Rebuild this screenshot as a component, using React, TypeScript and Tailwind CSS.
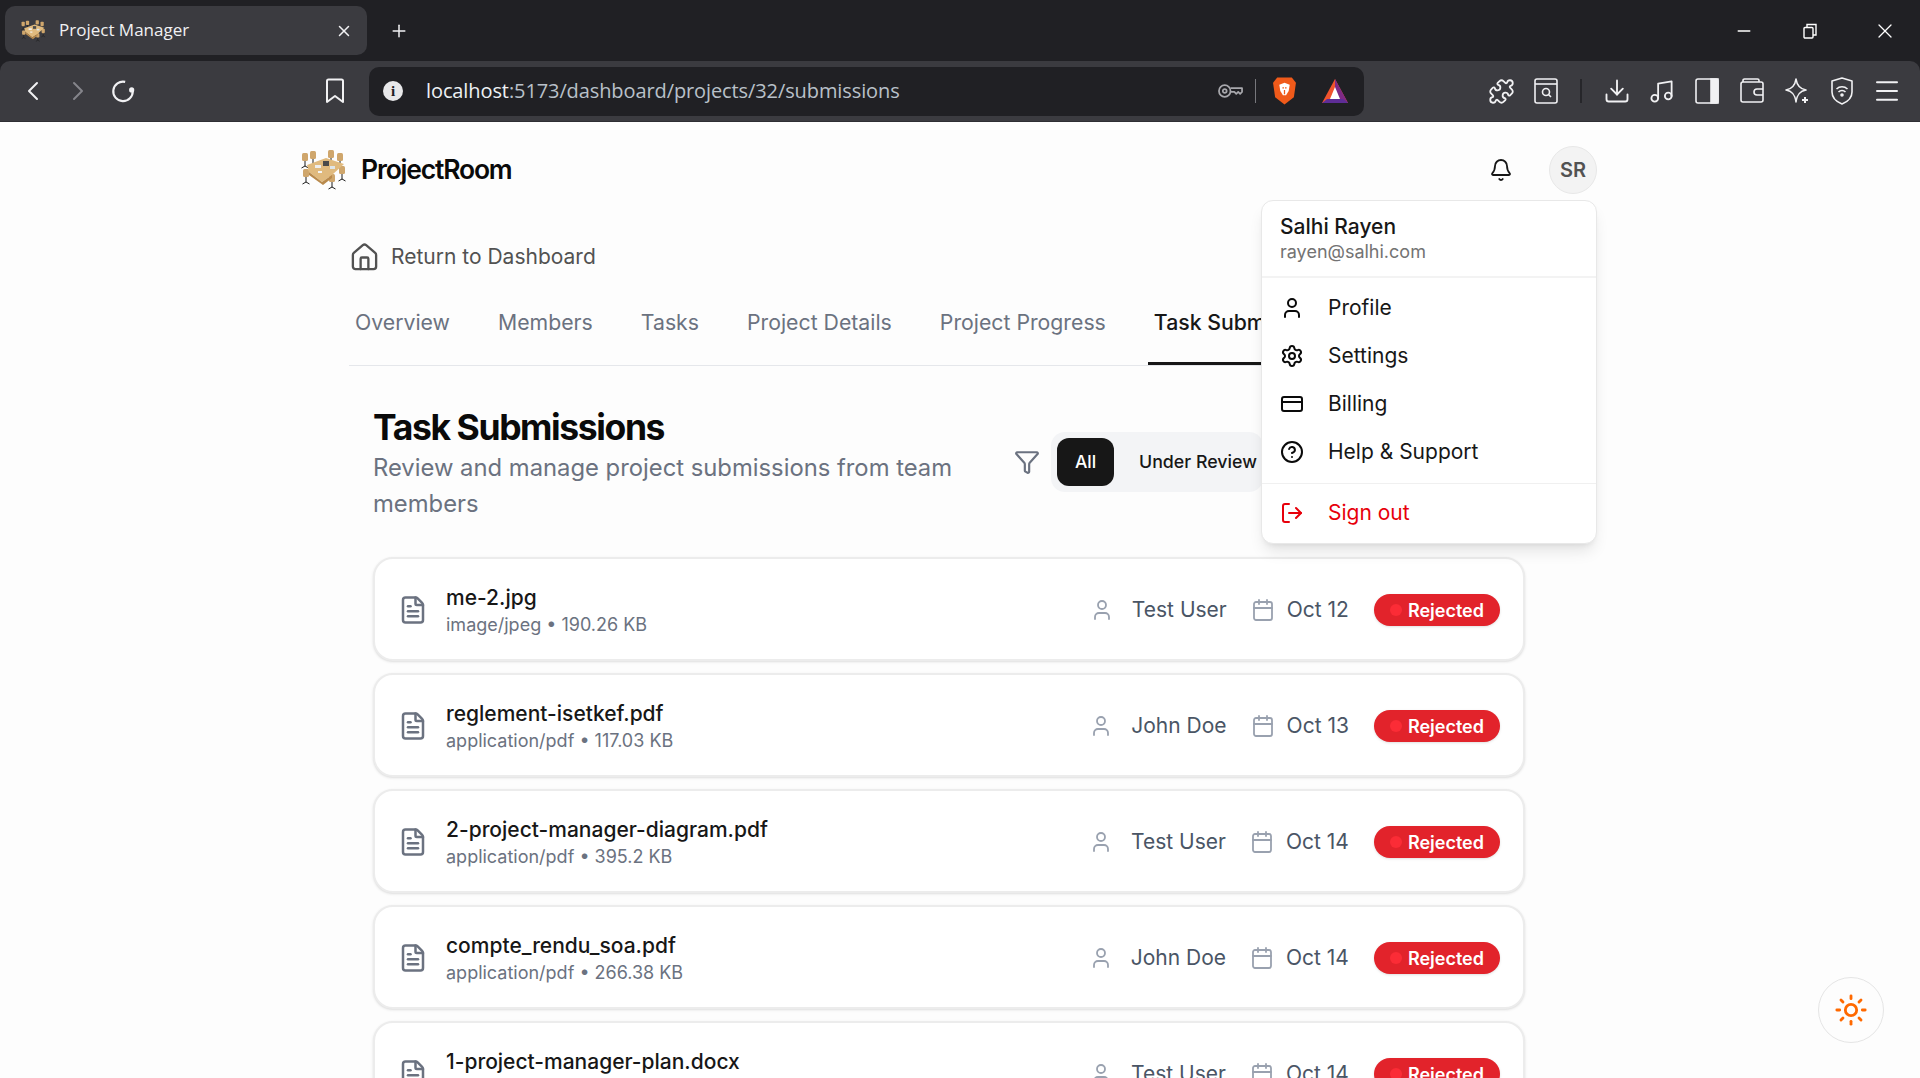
import type { ReactNode } from 'react'
import {
  Bell,
  Calendar,
  ChevronLeft,
  ChevronRight,
  CircleHelp,
  CreditCard,
  Download,
  FileText,
  Funnel,
  House,
  LogOut,
  Menu,
  Minus,
  Music,
  Plus,
  Puzzle,
  Settings,
  Sun,
  User,
  X,
} from 'lucide-react'

const tabs = ['Overview', 'Members', 'Tasks', 'Project Details', 'Project Progress', 'Task Submissions']

const submissions = [
  { name: 'me-2.jpg', meta: 'image/jpeg', size: '190.26 KB', user: 'Test User', date: 'Oct 12' },
  { name: 'reglement-isetkef.pdf', meta: 'application/pdf', size: '117.03 KB', user: 'John Doe', date: 'Oct 13' },
  { name: '2-project-manager-diagram.pdf', meta: 'application/pdf', size: '395.2 KB', user: 'Test User', date: 'Oct 14' },
  { name: 'compte_rendu_soa.pdf', meta: 'application/pdf', size: '266.38 KB', user: 'John Doe', date: 'Oct 14' },
  { name: '1-project-manager-plan.docx', meta: 'application/docx', size: '48.1 KB', user: 'Test User', date: 'Oct 14' },
]

const menuItems = [
  { label: 'Profile', icon: User },
  { label: 'Settings', icon: Settings },
  { label: 'Billing', icon: CreditCard },
  { label: 'Help & Support', icon: CircleHelp },
]

// conference table logo, also used as the favicon
function TableLogo({ className }: { className: string }) {
  const chairs = [
    [1, 3], [9, 1], [27, 0], [36, 3], [2, 19], [28, 24], [38, 16],
  ]
  return (
    <svg viewBox="0 0 48 40" className={className}>
      {chairs.map(([x, y]) => (
        <g key={`${x}-${y}`}>
          <path d={`M${x + 3} ${y + 8}v5m-3.500 2l3.500-2 3.500 2`} stroke="#1c1c1c" strokeWidth="1" fill="none" />
          <rect x={x} y={y} width="6" height="8" rx="1.500" fill="#cfa66c" />
        </g>
      ))}
      <path d="M6 15 L25 8 L43 14 L31 25 L21 32 L8 22 Z" fill="#e0ba7e" />
      <path d="M8 22 L21 32 L31 25 L31 28 L22 35 L8 25 Z" fill="#b98a4c" />
      <rect x="22" y="11" width="6" height="5" fill="#4a4a4a" />
      <rect x="14" y="15" width="6" height="3" fill="#eeeeee" />
      <rect x="29" y="16" width="5" height="3" fill="#dfe6ea" />
      <rect x="17" y="21" width="4" height="2" fill="#f5f5f5" />
    </svg>
  )
}

function ToolbarIcon({ children }: { children: ReactNode }) {
  return <div className="flex h-full w-[45px] shrink-0 items-center justify-center text-[#f1f1f3]">{children}</div>
}

function BrowserChrome() {
  return (
    <div className="bg-[#202024] font-['Open_Sans',sans-serif]">
      <div className="flex h-[61px] items-center pl-[5px]">
        <div className="flex h-[49px] w-[362px] items-center rounded-[10px] bg-[#3b3b40] pl-[16px] pr-[14px] text-[#f1f1f3]">
          <TableLogo className="h-[24px] w-[26px]" />
          <span className="mb-[1px] ml-[12px] flex-1 text-[17px]">Project Manager</span>
          <X size={18} strokeWidth={2} />
        </div>
        <Plus size={20} strokeWidth={1.8} className="ml-[22px] text-[#f1f1f3]" />
        <div className="ml-auto flex items-center text-white">
          <Minus size={20} strokeWidth={1.6} className="mr-[48px]" />
          <svg viewBox="0 0 16 16" className="mr-[55px] h-[16px] w-[16px]" fill="none" stroke="currentColor" strokeWidth="1.400">
            <rect x="2" y="4.500" width="9" height="10.500" rx="1" />
            <path d="M5 4.500V1.500h9v10.500h-3" />
          </svg>
          <X size={24} strokeWidth={1.3} className="mr-[23px]" />
        </div>
      </div>
      <div className="flex h-[61px] items-center rounded-t-[10px] border-b border-[#2e2e33] bg-[#3b3b40] pl-[10px]">
        <ToolbarIcon><ChevronLeft size={32} strokeWidth={1.5} /></ToolbarIcon>
        <div className="flex h-full w-[45px] items-center justify-center text-[#85858b]"><ChevronRight size={32} strokeWidth={1.5} /></div>
        <ToolbarIcon>
          <svg viewBox="0 0 24 24" className="h-[26px] w-[26px]" fill="none" stroke="currentColor" strokeWidth="2">
            <path d="M14 3.600A9 9 0 1 0 21 12" />
            <circle cx="20" cy="11" r="1.400" fill="currentColor" />
          </svg>
        </ToolbarIcon>
        <svg viewBox="0 0 20 26" className="ml-[180px] h-[26px] w-[20px]" fill="none" stroke="#f1f1f3" strokeWidth="2">
          <path d="M2 3a1.500 1.500 0 0 1 1.500-1.500h13A1.500 1.500 0 0 1 18 3v21l-8-6-8 6z" strokeLinejoin="round" />
        </svg>
        <div className="ml-[24px] flex h-[49px] w-[995px] items-center rounded-[10px] bg-[#202024] pl-[14px] pr-[15px]">
          <div className="flex h-[20px] w-[20px] items-center justify-center rounded-full bg-[#e8e8ea] font-['Liberation_Serif',serif] text-[15px] font-bold text-[#202024]">i</div>
          <div className="ml-[23px] flex-1 text-[20px] tracking-[-0.1px] text-[#b9c0c9]">
            <span className="text-[#eef1f4]">localhost</span>:5173/dashboard/projects/32/submissions
          </div>
          <svg viewBox="0 0 26 16" className="mr-[12px] h-[16px] w-[25px]" fill="none" stroke="#a8a8ad" strokeWidth="1.800">
            <circle cx="7" cy="8" r="6" />
            <circle cx="7" cy="8" r="2" />
            <path d="M13 5h12v4l-2 2-2-2-2 2-2-2h-4" strokeLinejoin="round" />
          </svg>
          <div className="h-[24px] w-[1px] bg-[#77777c]" />
          <svg viewBox="0 0 24 28" className="ml-[16px] h-[30px] w-[25px]">
            <path d="M5 1 H19 L23 6 L21 20 L12 27 L3 20 L1 6 Z" fill="#f05a1a" />
            <path d="M7 8 L12 6 L17 8 L16 14 L13.500 18 H10.500 L8 14 Z" fill="#fff" />
            <path d="M10 11h1.500M12.500 11H14M12 13v4" stroke="#f05a1a" strokeWidth="1.200" />
          </svg>
          <svg viewBox="0 0 28 26" className="ml-[24px] h-[26px] w-[28px]">
            <path d="M14 1 L27 25 H1 Z" fill="#f0532d" />
            <path d="M14 1 L27 25 H14 Z" fill="#7e2a86" />
            <path d="M6 21 H22 L27 25 H1 Z" fill="#5e2d97" />
            <path d="M14 9 L19 21 H9 Z" fill="#fff" />
          </svg>
        </div>
        <div className="ml-[115px] flex h-full items-center">
          <ToolbarIcon><Puzzle size={27} strokeWidth={1.6} /></ToolbarIcon>
          <div className="flex h-full w-[43px] shrink-0 items-center justify-center text-[#f1f1f3]">
            <svg viewBox="0 0 24 26" className="h-[26px] w-[24px]" fill="none" stroke="currentColor" strokeWidth="1.600">
              <rect x="1" y="1" width="22" height="24" rx="2" />
              <path d="M1 6h22" />
              <circle cx="12" cy="14" r="3.500" />
              <path d="M14.500 16.500l2.500 2.500" />
            </svg>
          </div>
          <div className="ml-[13px] h-[24px] w-[2px] bg-[#26262a]" />
          <div className="ml-[12px] flex h-full items-center">
            <ToolbarIcon><Download size={28} strokeWidth={1.6} /></ToolbarIcon>
            <ToolbarIcon><Music size={27} strokeWidth={1.6} /></ToolbarIcon>
            <ToolbarIcon>
              <svg viewBox="0 0 24 26" className="h-[26px] w-[24px]" fill="none" stroke="currentColor" strokeWidth="1.600">
                <rect x="1" y="1" width="22" height="24" rx="2" />
                <rect x="16" y="1" width="7" height="24" fill="currentColor" />
              </svg>
            </ToolbarIcon>
            <ToolbarIcon>
              <svg viewBox="0 0 24 26" className="h-[26px] w-[24px]" fill="none" stroke="currentColor" strokeWidth="1.600">
                <rect x="1" y="4" width="22" height="20" rx="2" />
                <path d="M3 4V2.500A1.500 1.500 0 0 1 4.500 1h13A1.500 1.500 0 0 1 19 2.500V4" />
                <path d="M23 11h-6a3 3 0 0 0 0 6h6" />
              </svg>
            </ToolbarIcon>
            <ToolbarIcon>
              <svg viewBox="0 0 26 28" className="h-[28px] w-[26px]" fill="none" stroke="currentColor" strokeWidth="1.600">
                <path d="M12 2 C13 9 16 12 22 13 C16 14 13 17 12 25 C11 17 8 14 2 13 C8 12 11 9 12 2 Z" strokeLinejoin="round" />
                <path d="M21 20v6M18 23h6" strokeWidth="2" />
              </svg>
            </ToolbarIcon>
            <ToolbarIcon>
              <svg viewBox="0 0 24 28" className="h-[28px] w-[24px]" fill="none" stroke="currentColor" strokeWidth="1.600">
                <path d="M12 1 L22 4 V15 C22 21 17 25 12 27 C7 25 2 21 2 15 V4 Z" strokeLinejoin="round" />
                <path d="M6.500 12a8 8 0 0 1 11 0M8.500 15a5 5 0 0 1 7 0" />
                <circle cx="12" cy="18" r="1" fill="currentColor" />
              </svg>
            </ToolbarIcon>
            <ToolbarIcon><Menu size={30} strokeWidth={1.6} /></ToolbarIcon>
          </div>
        </div>
      </div>
    </div>
  )
}

function UserMenu() {
  return (
    <div className="absolute right-0 top-[54px] z-10 w-[336px] rounded-[12px] border border-[#e8e8e8] bg-white shadow-lg">
      <div className="border-b-2 border-[#f3f3f3] px-[18px] pb-[12px] pt-[13px]">
        <p className="text-[21px] font-medium leading-[26px] text-[#171717]">Salhi Rayen</p>
        <p className="text-[18px] leading-[24px] text-[#737373]">rayen@salhi.com</p>
      </div>
      <div className="border-b border-[#f0f0f0] pb-[7px] pt-[6px]">
        {menuItems.map(({ label, icon: Icon }) => (
          <div key={label} className="flex h-[48px] items-center pl-[18px] text-[21px] text-[#171717]">
            <Icon size={24} strokeWidth={2} className="text-[#0a0a0a]" />
            <span className="ml-[24px]">{label}</span>
          </div>
        ))}
      </div>
      <div className="pb-[6px] pt-[5px]">
        <div className="flex h-[48px] items-center pl-[18px] text-[21px] text-[#e7000b]">
          <LogOut size={24} strokeWidth={2} />
          <span className="ml-[24px]">Sign out</span>
        </div>
      </div>
    </div>
  )
}

function SubmissionCard({ item }: { item: (typeof submissions)[number] }) {
  return (
    <div className="flex h-[104px] shrink-0 items-center rounded-[20px] border-2 border-[#ececec] bg-white pl-[23px] pr-[23px] pt-[2px] shadow-sm">
      <FileText size={30} strokeWidth={2} className="text-[#6b7280]" />
      <div className="ml-[18px] flex-1">
        <p className="text-[21px] font-medium leading-[28px] text-[#171717]">{item.name}</p>
        <p className="text-[18px] leading-[25px] text-[#6b7280]">
          {item.meta} • {item.size}
        </p>
      </div>
      <User size={24} strokeWidth={1.8} className="text-[#99a1af]" />
      <span className="ml-[18px] text-[21px] text-[#4a5565]">{item.user}</span>
      <Calendar size={24} strokeWidth={1.8} className="ml-[24px] text-[#99a1af]" />
      <span className="ml-[12px] text-[21px] text-[#4a5565]">{item.date}</span>
      <div className="ml-[25px] flex h-[32px] items-center rounded-full bg-[#e2232b] pl-[16px] pr-[16px] shadow-sm">
        <span className="h-[12px] w-[12px] rounded-full bg-[#fb2c36]" />
        <span className="ml-[6px] text-[18px] font-semibold text-white">Rejected</span>
      </div>
    </div>
  )
}

export default function App() {
  return (
    <div className="relative flex h-[1078px] flex-col overflow-hidden bg-[#fdfdfd] font-['Inter',sans-serif]">
      <BrowserChrome />

      <header className="ml-[301px] flex h-[96px] w-[1296px] shrink-0 items-center">
        <TableLogo className="h-[40px] w-[48px]" />
        <span className="ml-[12px] text-[26.500px] font-semibold tracking-[-1.2px] text-[#0a0a0a]">ProjectRoom</span>
        <Bell size={24} strokeWidth={1.8} className="ml-auto text-[#171717]" />
        <div className="relative ml-[36px]">
          <div className="flex h-[48px] w-[48px] items-center justify-center rounded-full border border-[#e8e8e8] bg-[#f3f3f3] text-[20px] font-semibold text-[#525252]">
            SR
          </div>
          <UserMenu />
        </div>
      </header>

      <main className="ml-[349px] w-[1201px]">
        <div className="mt-[19px] flex h-[40px] items-center text-[21px] text-[#525252]">
          <House size={31} strokeWidth={1.8} />
          <span className="ml-[11px]">Return to Dashboard</span>
        </div>

        <nav className="mt-[3px] flex h-[86px] gap-[48px] overflow-hidden border-b border-[#e5e7eb] pl-[6px]">
          {tabs.map((tab, i) => (
            <div
              key={tab}
              className={
                i === 5
                  ? 'flex shrink-0 items-center border-y-[3px] border-t-transparent border-b-[#171717] px-[6px] text-[21.250px] font-medium text-[#171717] -mx-[6px]'
                  : 'flex shrink-0 items-center text-[21.250px] text-[#6b7280]'
              }
            >
              {tab}
            </div>
          ))}
        </nav>

        <section className="pl-[24px] pr-[25px] pt-[39px]">
          <div className="flex items-center">
            <div className="w-[641px] shrink-0">
              <h1 className="text-[35.500px] font-bold leading-[45px] tracking-[-1.4px] text-[#0a0a0a]">Task Submissions</h1>
              <p className="text-[23.800px] leading-[36px] text-[#6b7280]">Review and manage project submissions from team members</p>
            </div>
            <Funnel size={26} strokeWidth={2} className="mb-[3px] text-[#6b7280]" />
            <div className="mb-[3px] ml-[11px] flex h-[60px] items-center gap-[25px] rounded-[14px] bg-[#f3f4f6] px-[6px]">
              <div className="flex h-[48px] w-[57px] items-center justify-center rounded-[12px] bg-[#171717] text-[17.500px] font-medium text-white">All</div>
              <span className="text-[17.800px] font-medium text-[#171717]">Under Review</span>
            </div>
          </div>

          <div className="mt-[35px] flex flex-col gap-[12px]">
            {submissions.map((item) => (
              <SubmissionCard key={item.name} item={item} />
            ))}
          </div>
        </section>
      </main>

      <div className="absolute left-[1818px] top-[977px] flex h-[66px] w-[66px] items-center justify-center rounded-full border border-[#e5e5e5] bg-[#fdfdfd] text-[#ff6900]">
        <Sun size={34} strokeWidth={2} />
      </div>
    </div>
  )
}
